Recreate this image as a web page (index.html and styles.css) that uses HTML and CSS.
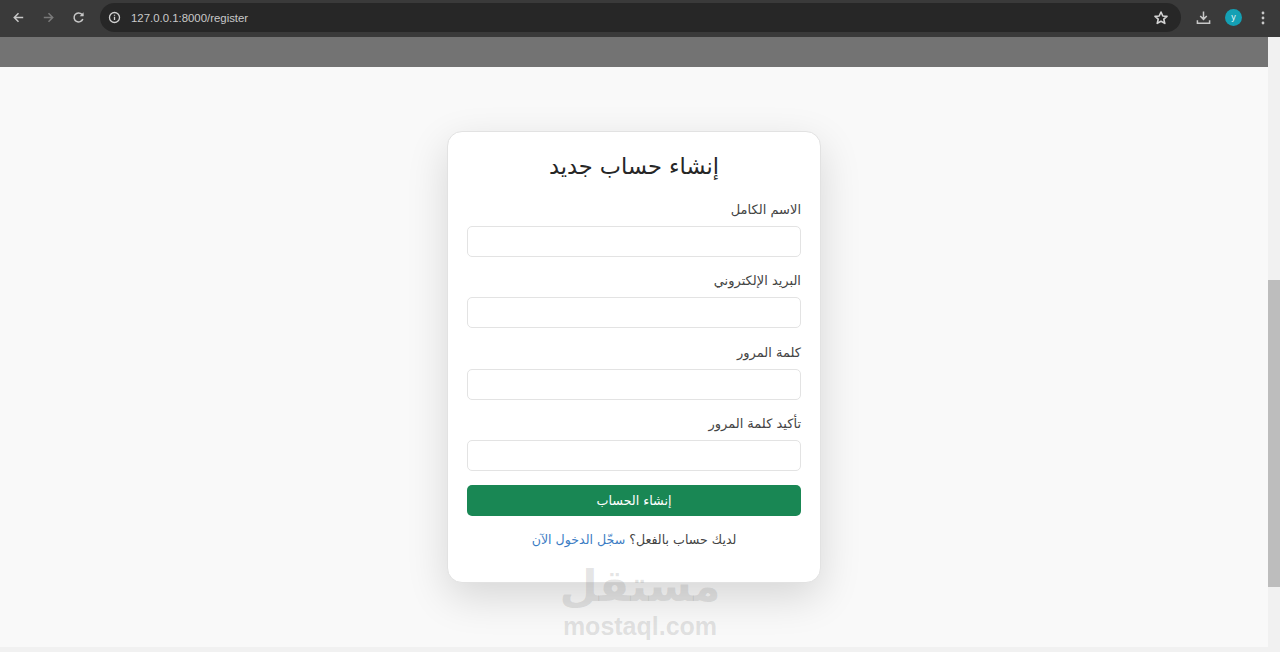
FILE: index.html
```html
<!DOCTYPE html>
<html lang="ar" dir="rtl">
<head>
<meta charset="UTF-8">
<title>إنشاء حساب جديد</title>
<link rel="stylesheet" href="styles.css">
</head>
<body>
	<div class="toolbar" dir="ltr">
		<div class="navbtns">
			<svg class="ico" viewBox="0 0 16 16"><path d="M13 8H4M8 3.500 3.500 8 8 12.500" fill="none" stroke="#c8c8c8" stroke-width="1.600"/></svg>
			<svg class="ico" viewBox="0 0 16 16"><path d="M3 8h9M8 3.500 12.500 8 8 12.500" fill="none" stroke="#7a7a7a" stroke-width="1.600"/></svg>
			<svg class="ico" viewBox="0 0 16 16"><path d="M12.600 9.500A4.800 4.800 0 1 1 11.600 4.600L13 6" fill="none" stroke="#c8c8c8" stroke-width="1.600"/><path d="M13.400 2.400v4.200H9.200z" fill="#c8c8c8"/></svg>
		</div>
		<div class="omnibox">
			<span class="siteinfo">
				<svg viewBox="0 0 14 14" width="13" height="13"><circle cx="7" cy="7" r="5.400" fill="none" stroke="#d0d0d0" stroke-width="1.400"/><path d="M7 6.200v3.600M7 4v1.200" stroke="#d0d0d0" stroke-width="1.400"/></svg>
			</span>
			<span class="url">127.0.0.1:8000/register</span>
			<svg class="star" viewBox="0 0 16 16"><path d="M8 2l1.800 4 4.200.4-3.200 2.800 1 4.200L8 11.200 4.200 13.400l1-4.200L2 6.400 6.200 6z" fill="none" stroke="#d4d4d4" stroke-width="1.600" stroke-linejoin="round"/></svg>
		</div>
		<div class="tools">
			<svg class="ico" viewBox="0 0 16 16"><path d="M8 1.500v8M4.500 6.500 8 10l3.500-3.500M1.500 11v3h13v-3" fill="none" stroke="#c8c8c8" stroke-width="1.600"/></svg>
			<span class="avatar">y</span>
			<svg class="dots" viewBox="0 0 4 16"><circle cx="2" cy="3" r="1.400" fill="#c8c8c8"/><circle cx="2" cy="8" r="1.400" fill="#c8c8c8"/><circle cx="2" cy="13" r="1.400" fill="#c8c8c8"/></svg>
		</div>
	</div>
	<div class="viewport" dir="ltr">
		<div class="page">
			<div class="topbar"></div>
			<div class="content">
				<form class="card" dir="rtl">
					<h2 class="title">إنشاء حساب جديد</h2>
					<label class="fieldlabel">الاسم الكامل</label>
					<input class="field" type="text">
					<label class="fieldlabel">البريد الإلكتروني</label>
					<input class="field" type="text">
					<label class="fieldlabel">كلمة المرور</label>
					<input class="field" type="text">
					<label class="fieldlabel">تأكيد كلمة المرور</label>
					<input class="field" type="text">
					<button class="submit" type="button">إنشاء الحساب</button>
					<p class="loginline">لديك حساب بالفعل؟ <a href="#">سجّل الدخول الآن</a></p>
				</form>
			</div>
		</div>
		<div class="scrollbar"><div class="thumb"></div></div>
	</div>
	<div class="bottomstrip"></div>
	<div class="watermark">
		<div class="wm-ar">مستقل</div>
		<div class="wm-en">mostaql.com</div>
	</div>
</body>
</html>
```

FILE: styles.css
```css
*{margin: 0;padding: 0;box-sizing: border-box;}
html,body{height: 100%;overflow: hidden;}
body{
	display: flex;
	flex-direction: column;
	background: #f9f9f9;
	font-family: "DejaVu Sans","Noto Sans",sans-serif;
	color: #2b2b2b;
}
.toolbar{
	height: 37px;
	flex: none;
	display: flex;
	align-items: center;
	background: #3a3a3a;
	padding: 0 10px 2px 11px;
}
.navbtns{
	display: flex;
	gap: 15px;
	width: 89px;
}
.ico{width: 15px;height: 15px;}
.omnibox{
	flex: none;
	width: 1081px;
	height: 29px;
	display: flex;
	align-items: center;
	background: #272727;
	border-radius: 15px;
	padding: 0 12px 0 7px;
}
.siteinfo{
	display: flex;
	align-items: center;
	justify-content: center;
	width: 15px;
	margin-right: 9px;
}
.url{
	flex: 1;
	font: 11.4px "Liberation Sans",sans-serif;
	color: #c9c9c9;
}
.star{width: 16px;height: 16px;}
.tools{
	display: flex;
	align-items: center;
	margin-left: 15px;
}
.avatar{
	width: 17px;
	height: 17px;
	margin-left: 14px;
	border-radius: 50%;
	background: #14a0b4;
	color: #e6f6f8;
	font: 9px/17px "Liberation Sans",sans-serif;
	text-align: center;
}
.dots{width: 4px;height: 16px;margin-left: 19px;}
.viewport{
	flex: 1;
	min-height: 0;
	display: flex;
}
.page{
	flex: 1;
	display: flex;
	flex-direction: column;
}
.topbar{
	height: 30px;
	flex: none;
	background: #737373;
}
.content{
	flex: 1;
	display: flex;
	justify-content: center;
	padding-top: 64px;
}
.card{
	width: 374px;
	height: 452px;
	display: flex;
	flex-direction: column;
	padding: 19px 19px 20px;
	background: #fff;
	border: 1px solid #e2e2e2;
	border-radius: 15px;
	box-shadow: 0 14px 42px rgba(0,0,0,.14);
}
.title{
	font-size: 22.5px;
	font-weight: normal;
	line-height: 30px;
	text-align: center;
	color: #262626;
	margin-bottom: 19.6px;
}
.fieldlabel{
	font-size: 13px;
	line-height: 18px;
	color: #444;
	margin-bottom: 7px;
}
.field{
	height: 31px;
	flex: none;
	margin-bottom: 15.5px;
	background: #fff;
	border: 1px solid #e3e3e3;
	border-radius: 5px;
}
.submit{
	height: 31.5px;
	flex: none;
	margin-top: -2px;
	background: #198754;
	border: 0;
	border-radius: 5px;
	color: #fff;
	font: 12.7px "DejaVu Sans",sans-serif;
}
.loginline{
	margin-top: 15px;
	font-size: 12.6px;
	line-height: 18px;
	text-align: center;
	color: #444;
}
.loginline a{color: #3b7cc4;text-decoration: none;}
.scrollbar{
	width: 12px;
	flex: none;
	background: #f1f1f1;
	padding-top: 243px;
}
.thumb{height: 307px;background: #bdbdbd;}
.bottomstrip{height: 5px;flex: none;background: #f1f1f1;}
.watermark{
	position: absolute;
	left: 540px;
	top: 559px;
	width: 200px;
	text-align: center;
	color: rgba(120,120,120,.2);
	pointer-events: none;
}
.wm-ar{font: bold 44px/54px "DejaVu Sans",sans-serif;}
.wm-en{font: bold 25px/26px "Liberation Sans",sans-serif;}
```
